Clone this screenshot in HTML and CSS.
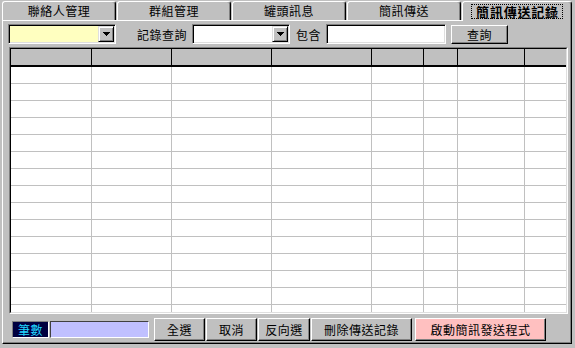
FILE: index.html
```html
<!DOCTYPE html>
<html lang="zh-Hant">
<head>
    <meta charset="utf-8">
    <title>簡訊傳送記錄</title>
    <link rel="stylesheet" href="styles.css">
</head>
<body>
<div class="win">
    <div class="tabs">
        <div class="tab">聯絡人管理</div>
        <div class="tab">群組管理</div>
        <div class="tab">罐頭訊息</div>
        <div class="tab">簡訊傳送</div>
        <div class="tab on"><span class="focus">簡訊傳送記錄</span></div>
    </div>
    <div class="page">
        <div class="bar">
            <div class="combo c1">
                <span class="drop"><svg width="7" height="4"><path d="M0 0h7v1h-1v1h-1v1h-1v1h-1v-1h-1v-1h-1v-1h-1z"/></svg></span>
            </div>
            <span class="lbl l1">記錄查詢</span>
            <div class="combo c2">
                <span class="drop"><svg width="7" height="4"><path d="M0 0h7v1h-1v1h-1v1h-1v1h-1v-1h-1v-1h-1v-1h-1z"/></svg></span>
            </div>
            <span class="lbl l2">包含</span>
            <div class="edit"></div>
            <div class="btn query">查詢</div>
        </div>
        <div class="grid">
            <div class="grid-in">
                <div class="row head"><span></span><span></span><span></span><span></span><span></span><span></span><span></span><span></span></div>
                <div class="row"><span></span><span></span><span></span><span></span><span></span><span></span><span></span><span></span></div>
                <div class="row"><span></span><span></span><span></span><span></span><span></span><span></span><span></span><span></span></div>
                <div class="row"><span></span><span></span><span></span><span></span><span></span><span></span><span></span><span></span></div>
                <div class="row"><span></span><span></span><span></span><span></span><span></span><span></span><span></span><span></span></div>
                <div class="row"><span></span><span></span><span></span><span></span><span></span><span></span><span></span><span></span></div>
                <div class="row"><span></span><span></span><span></span><span></span><span></span><span></span><span></span><span></span></div>
                <div class="row"><span></span><span></span><span></span><span></span><span></span><span></span><span></span><span></span></div>
                <div class="row"><span></span><span></span><span></span><span></span><span></span><span></span><span></span><span></span></div>
                <div class="row"><span></span><span></span><span></span><span></span><span></span><span></span><span></span><span></span></div>
                <div class="row"><span></span><span></span><span></span><span></span><span></span><span></span><span></span><span></span></div>
                <div class="row"><span></span><span></span><span></span><span></span><span></span><span></span><span></span><span></span></div>
                <div class="row"><span></span><span></span><span></span><span></span><span></span><span></span><span></span><span></span></div>
                <div class="row"><span></span><span></span><span></span><span></span><span></span><span></span><span></span><span></span></div>
                <div class="row"><span></span><span></span><span></span><span></span><span></span><span></span><span></span><span></span></div>
                <div class="row"><span></span><span></span><span></span><span></span><span></span><span></span><span></span><span></span></div>
            </div>
        </div>
        <div class="foot">
            <span class="cnt">筆數</span>
            <span class="cntbox"></span>
            <div class="btn b1">全選</div>
            <div class="btn b2">取消</div>
            <div class="btn b3">反向選</div>
            <div class="btn b4">刪除傳送記錄</div>
            <div class="btn b5">啟動簡訊發送程式</div>
        </div>
    </div>
</div>
</body>
</html>
```

FILE: styles.css
```css
* {
    margin: 0;
    padding: 0;
    box-sizing: border-box;
}
html, body {
    height: 100%;
}
body {
    background: #c0c0c0;
    font-family: "Noto Sans CJK TC", "Noto Sans CJK SC", sans-serif;
    font-size: 12px;
    letter-spacing: 0.5px;
    color: #000;
    overflow: hidden;
}
.win {
    width: 575px;
    height: 348px;
}

/* tabs */
.tabs {
    display: flex;
    height: 20px;
    padding-left: 2px;
}
.tab {
    width: 114px;
    height: 19px;
    margin: 1px 1px 0 0;
    border-top: 1px solid #fff;
    border-left: 1px solid #fff;
    border-right: 1px solid #000;
    border-radius: 3px 3px 0 0;
    box-shadow: inset -1px 0 #808080;
    text-align: center;
    line-height: 18px;
}
.tab.on {
    flex: 1;
    width: auto;
    height: 20px;
    margin-right: 3px;
    position: relative;
    z-index: 1;
    background: #c0c0c0;
    padding-top: 2px;
    line-height: 13px;
    font-size: 13px;
    font-weight: bold;
    letter-spacing: 0.8px;
}
.focus {
    display: inline-block;
    border: 1px dotted #000;
    padding: 0 3px 0 4px;
}

/* page */
.page {
    margin-left: 2px;
    width: 570px;
    height: 324px;
    border: 1px solid;
    border-color: #fff #000 #000 #fff;
    box-shadow: inset -1px -1px #808080;
    padding-top: 3px;
}
.bar {
    display: flex;
    align-items: center;
    height: 20px;
    padding-left: 5px;
}
.combo {
    display: flex;
    justify-content: flex-end;
    height: 20px;
    padding: 1px;
    border: 1px solid;
    border-color: #808080 #fff #fff #808080;
    box-shadow: inset 1px 1px #000, inset -1px -1px #dfdfdf;
    background: #fff;
}
.c1 {
    width: 108px;
    background: #ffffc0;
}
.c2 {
    width: 98px;
}
.drop {
    display: flex;
    align-items: center;
    justify-content: center;
    width: 16px;
    height: 16px;
    background: #c0c0c0;
    border: 1px solid;
    border-color: #dfdfdf #000 #000 #dfdfdf;
    box-shadow: inset 1px 1px #fff, inset -1px -1px #808080;
}
.l1 {
    margin: 0 5px 0 21px;
}
.l2 {
    margin: 0 5px 0 6px;
}
.edit {
    width: 120px;
    height: 20px;
    border: 1px solid;
    border-color: #808080 #fff #fff #808080;
    box-shadow: inset 1px 1px #000, inset -1px -1px #dfdfdf;
    background: #fff;
}
.btn {
    height: 23px;
    background: #c0c0c0;
    border: 1px solid;
    border-color: #fff #000 #000 #fff;
    box-shadow: inset -1px -1px #808080;
    text-align: center;
    line-height: 21px;
}
.query {
    align-self: flex-start;
    width: 57px;
    height: 19px;
    margin: 1px 0 0 5px;
    line-height: 17px;
}

/* grid */
.grid {
    width: 559px;
    height: 267px;
    margin: 3px 0 0 6px;
    border: 1px solid;
    border-color: #808080 #fff #fff #808080;
}
.grid-in {
    height: 100%;
    overflow: hidden;
    background: #fff;
    border: 1px solid;
    border-color: #000 #dfdfdf #dfdfdf #000;
}
.row {
    display: grid;
    grid-template-columns: 81px 80px 100px 100px 52px 34px 67px 1fr;
    height: 17px;
}
.row span {
    border-right: 1px solid #c0c0c0;
    border-bottom: 1px solid #c0c0c0;
}
.row span:last-child {
    border-right: 0;
}
.head {
    height: 18px;
    background: #c0c0c0;
}
.head span {
    border-right-color: #000;
    border-bottom: 2px solid #000;
}

/* footer */
.foot {
    display: flex;
    align-items: center;
    height: 23px;
    margin-top: 4px;
    padding-left: 9px;
}
.cnt {
    width: 37px;
    height: 17px;
    background: #000040;
    color: #20d8ff;
    text-align: center;
    line-height: 15px;
    border: 1px solid;
    border-color: #808080 #fff #fff #808080;
}
.cntbox {
    width: 99px;
    height: 17px;
    margin-left: 1px;
    background: #c0c0ff;
    border: 1px solid;
    border-color: #404040 #fff #fff #404040;
}
.b1 { width: 51px; margin-left: 5px; }
.b2 { width: 51px; margin-left: 1px; }
.b3 { width: 52px; margin-left: 1px; }
.b4 { width: 101px; margin-left: 1px; }
.b5 { width: 131px; margin-left: 3px; background: #ffc0c0; }
```
